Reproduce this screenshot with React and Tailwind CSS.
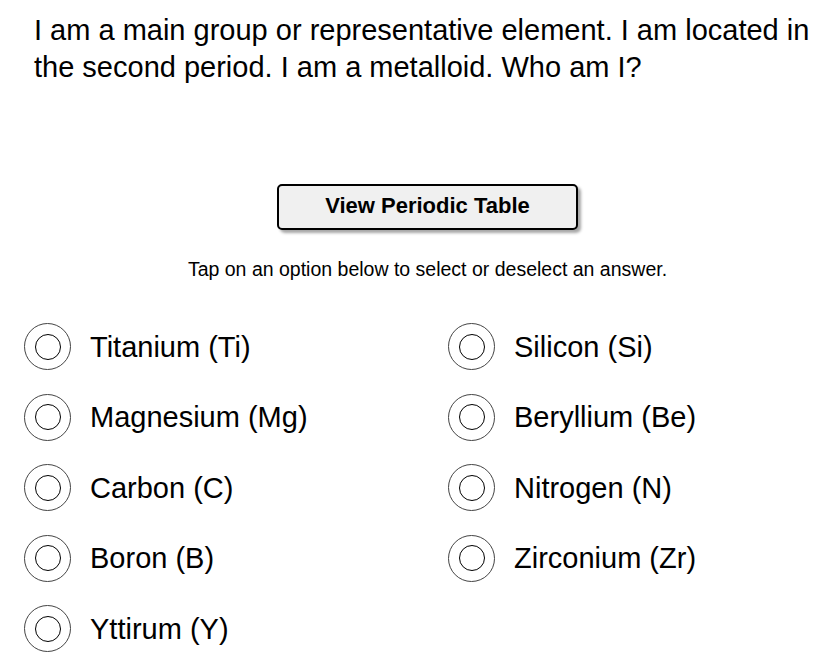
import React, { useState } from 'react';

const options = [
  ['Titanium (Ti)', 'Silicon (Si)'],
  ['Magnesium (Mg)', 'Beryllium (Be)'],
  ['Carbon (C)', 'Nitrogen (N)'],
  ['Boron (B)', 'Zirconium (Zr)'],
  ['Yttirum (Y)', null],
];

function Option({ label, selected, onToggle }) {
  return (
    <button
      type="button"
      onClick={onToggle}
      className="flex items-center gap-[19px] text-left"
    >
      <span className="flex h-[47px] w-[47px] items-center justify-center rounded-full border border-[#444]">
        <span
          className={
            'h-[26px] w-[26px] rounded-full border-[1.5px] border-black ' +
            (selected ? 'bg-black' : 'bg-white')
          }
        />
      </span>
      <span className="text-[29px] leading-[34px] text-black">{label}</span>
    </button>
  );
}

export default function App() {
  const [picked, setPicked] = useState([]);

  const toggle = (name) => {
    setPicked((p) => (p.includes(name) ? p.filter((x) => x !== name) : [...p, name]));
  };

  return (
    <div
      className="min-h-screen bg-white text-black"
      style={{ fontFamily: '"Liberation Sans", Arial, sans-serif' }}
    >
      {/* question */}
      <div className="pl-[34px] pr-[3px] pt-[12px]">
        <p className="text-[29px] leading-[37px]">
          I am a main group or representative element. I am located in the second period. I am a
          metalloid. Who am I?
        </p>

        <div className="mt-[98px] flex justify-center">
          <button
            type="button"
            className="h-[46px] w-[301px] rounded-[5px] border-2 border-black bg-[#f0f0f0] pb-[4px] text-[22px] font-bold shadow-[3px_3px_3px_rgba(0,0,0,0.35)]"
          >
            View Periodic Table
          </button>
        </div>

        <p className="mt-[27px] text-center text-[19.5px] leading-[24px]">
          Tap on an option below to select or deselect an answer.
        </p>
      </div>

      {/* answers */}
      <div className="mt-[42px] grid grid-cols-[424px_1fr] gap-y-[23.5px] pl-[24px]">
        {options.map((row, i) => (
          <React.Fragment key={i}>
            {row.map((name, j) =>
              name ? (
                <Option
                  key={j}
                  label={name}
                  selected={picked.includes(name)}
                  onToggle={() => toggle(name)}
                />
              ) : (
                <div key={j} />
              )
            )}
          </React.Fragment>
        ))}
      </div>
    </div>
  );
}
